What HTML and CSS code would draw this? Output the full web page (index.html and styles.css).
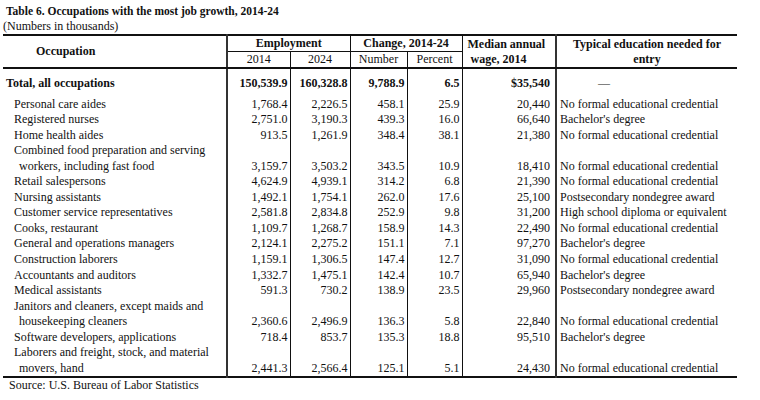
FILE: index.html
```html
<!DOCTYPE html>
<html>
<head>
<meta charset="utf-8">
<link rel="stylesheet" href="styles.css">
</head>
<body>
<div class="page">
  <div class="title">Table 6. Occupations with the most job growth, 2014-24</div>
  <div class="subtitle">(Numbers in thousands)</div>
  <table class="tbl">
    <colgroup>
      <col class="c-occ"><col class="c-e14"><col class="c-e24"><col class="c-num"><col class="c-pct"><col class="c-wage"><col class="c-edu">
    </colgroup>
    <thead>
      <tr class="h1">
        <th rowspan="2" class="occ">Occupation</th>
        <th colspan="2" class="grp vl2">Employment</th>
        <th colspan="2" class="grp vl">Change, 2014-24</th>
        <th rowspan="2" class="wage vl">Median annual<br><span class="ind">wage, 2014</span></th>
        <th rowspan="2" class="edu vl2">Typical education needed for<br>entry</th>
      </tr>
      <tr class="h2">
        <th class="sub vl2">2014</th>
        <th class="sub vl">2024</th>
        <th class="sub vl">Number</th>
        <th class="sub vl">Percent</th>
      </tr>
    </thead>
    <tbody>
      <tr class="total">
        <td class="name">Total, all occupations</td>
        <td class="n vl2">150,539.9</td>
        <td class="n vl">160,328.8</td>
        <td class="n vl">9,788.9</td>
        <td class="n vl">6.5</td>
        <td class="w vl">$35,540</td>
        <td class="e vl2 dash">—</td>
      </tr>
      <tr><td class="name">Personal care aides</td><td class="n vl2">1,768.4</td><td class="n vl">2,226.5</td><td class="n vl">458.1</td><td class="n vl">25.9</td><td class="w vl">20,440</td><td class="e vl2">No formal educational credential</td></tr>
      <tr><td class="name">Registered nurses</td><td class="n vl2">2,751.0</td><td class="n vl">3,190.3</td><td class="n vl">439.3</td><td class="n vl">16.0</td><td class="w vl">66,640</td><td class="e vl2">Bachelor's degree</td></tr>
      <tr><td class="name">Home health aides</td><td class="n vl2">913.5</td><td class="n vl">1,261.9</td><td class="n vl">348.4</td><td class="n vl">38.1</td><td class="w vl">21,380</td><td class="e vl2">No formal educational credential</td></tr>
      <tr><td class="name">Combined food preparation and serving<br><span class="ind">workers, including fast food</span></td><td class="n vl2">3,159.7</td><td class="n vl">3,503.2</td><td class="n vl">343.5</td><td class="n vl">10.9</td><td class="w vl">18,410</td><td class="e vl2">No formal educational credential</td></tr>
      <tr><td class="name">Retail salespersons</td><td class="n vl2">4,624.9</td><td class="n vl">4,939.1</td><td class="n vl">314.2</td><td class="n vl">6.8</td><td class="w vl">21,390</td><td class="e vl2">No formal educational credential</td></tr>
      <tr><td class="name">Nursing assistants</td><td class="n vl2">1,492.1</td><td class="n vl">1,754.1</td><td class="n vl">262.0</td><td class="n vl">17.6</td><td class="w vl">25,100</td><td class="e vl2">Postsecondary nondegree award</td></tr>
      <tr><td class="name">Customer service representatives</td><td class="n vl2">2,581.8</td><td class="n vl">2,834.8</td><td class="n vl">252.9</td><td class="n vl">9.8</td><td class="w vl">31,200</td><td class="e vl2">High school diploma or equivalent</td></tr>
      <tr><td class="name">Cooks, restaurant</td><td class="n vl2">1,109.7</td><td class="n vl">1,268.7</td><td class="n vl">158.9</td><td class="n vl">14.3</td><td class="w vl">22,490</td><td class="e vl2">No formal educational credential</td></tr>
      <tr><td class="name">General and operations managers</td><td class="n vl2">2,124.1</td><td class="n vl">2,275.2</td><td class="n vl">151.1</td><td class="n vl">7.1</td><td class="w vl">97,270</td><td class="e vl2">Bachelor's degree</td></tr>
      <tr><td class="name">Construction laborers</td><td class="n vl2">1,159.1</td><td class="n vl">1,306.5</td><td class="n vl">147.4</td><td class="n vl">12.7</td><td class="w vl">31,090</td><td class="e vl2">No formal educational credential</td></tr>
      <tr><td class="name">Accountants and auditors</td><td class="n vl2">1,332.7</td><td class="n vl">1,475.1</td><td class="n vl">142.4</td><td class="n vl">10.7</td><td class="w vl">65,940</td><td class="e vl2">Bachelor's degree</td></tr>
      <tr><td class="name">Medical assistants</td><td class="n vl2">591.3</td><td class="n vl">730.2</td><td class="n vl">138.9</td><td class="n vl">23.5</td><td class="w vl">29,960</td><td class="e vl2">Postsecondary nondegree award</td></tr>
      <tr><td class="name">Janitors and cleaners, except maids and<br><span class="ind">housekeeping cleaners</span></td><td class="n vl2">2,360.6</td><td class="n vl">2,496.9</td><td class="n vl">136.3</td><td class="n vl">5.8</td><td class="w vl">22,840</td><td class="e vl2">No formal educational credential</td></tr>
      <tr><td class="name">Software developers, applications</td><td class="n vl2">718.4</td><td class="n vl">853.7</td><td class="n vl">135.3</td><td class="n vl">18.8</td><td class="w vl">95,510</td><td class="e vl2">Bachelor's degree</td></tr>
      <tr class="last"><td class="name">Laborers and freight, stock, and material<br><span class="ind">movers, hand</span></td><td class="n vl2">2,441.3</td><td class="n vl">2,566.4</td><td class="n vl">125.1</td><td class="n vl">5.1</td><td class="w vl">24,430</td><td class="e vl2">No formal educational credential</td></tr>
    </tbody>
  </table>
  <div class="source">Source: U.S. Bureau of Labor Statistics</div>
</div>
</body>
</html>
```

FILE: styles.css
```css
html, body {
  margin: 0;
  padding: 0;
  background: #fff;
}
body {
  font-family: "Liberation Serif", "Times New Roman", serif;
  font-size: 12px;
  color: #111;
}
.page {
  padding: 4px 0 0 3px;
}
.title {
  font-weight: bold;
  font-size: 11.5px;
  line-height: 15px;
  padding-left: 3px;
}
.subtitle {
  line-height: 15px;
}
.tbl {
  border-collapse: collapse;
  table-layout: fixed;
  width: 734px;
  border-top: 2px solid #111;
  border-bottom: 2px solid #111;
}
.c-occ { width: 224px; }
.c-e14 { width: 63px; }
.c-e24 { width: 60px; }
.c-num { width: 57px; }
.c-pct { width: 55px; }
.c-wage { width: 94px; }
.c-edu { width: 181px; }

.tbl th, .tbl td {
  padding: 0;
  white-space: nowrap;
  overflow: visible;
}
.tbl th { line-height: 15px; }
.vl { border-left: 1px solid #111; }
.vl2 { border-left: 2px solid #333; }

.tbl thead tr.h2 th { border-bottom: 2px solid #111; }
.tbl thead th.occ, .tbl thead th.wage, .tbl thead th.edu { border-bottom: 2px solid #111; }

.h1 th {
  font-weight: bold;
  height: 15px;
}
.tbl .h1 .occ {
  text-align: left;
  padding-left: 33px;
  vertical-align: middle;
}
.h1 .grp {
  text-align: center;
}
.tbl .h1 .wage {
  text-align: left;
  padding-left: 5px;
  vertical-align: top;
  padding-top: 1px;
}
.h1 .wage .ind { padding-left: 3px; }
.tbl .h1 .edu {
  text-align: center;
  vertical-align: top;
  padding-top: 1px;
}
.h2 th.sub {
  font-weight: normal;
  text-align: center;
  border-top: 1px solid #111;
  height: 14px;
}

.tbl tbody td {
  line-height: 15.55px;
  vertical-align: bottom;
}
.tbl tbody td.name {
  padding-left: 11px;
}
.tbl tbody td.name .ind { padding-left: 5px; }
.tbl tbody td.n {
  text-align: right;
  padding-right: 2px;
}
.tbl tbody td.w {
  text-align: right;
  padding-right: 5px;
}
.tbl tbody td.e {
  text-align: left;
  padding-left: 3px;
}
.tbl tr.total td {
  font-weight: bold;
  padding-top: 7px;
  padding-bottom: 5px;
}
.tbl tr.total td.name { padding-left: 3px; }
.tbl tr.total td.dash { padding-left: 41px; font-weight: normal; }

.source {
  line-height: 13px;
  padding-left: 6px;
  padding-top: 1px;
}
```
